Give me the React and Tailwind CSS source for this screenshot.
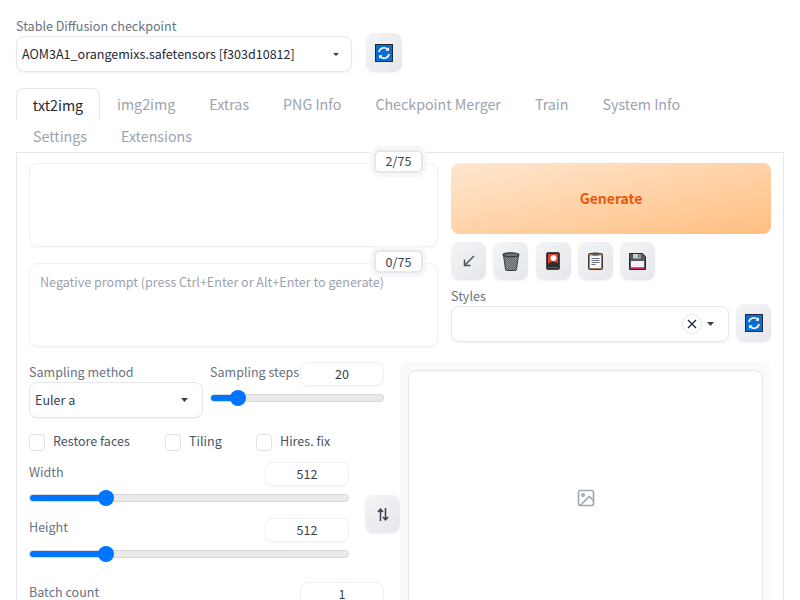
import React from 'react';

const inputBox = 'h-6 w-[84px] rounded-lg border border-[#eef0f2] bg-white text-center text-[12.55px] leading-[21px] text-[#374151] shadow-[0_1px_2px_rgba(0,0,0,0.04)]';
const btnBase = 'flex items-center justify-center rounded-lg bg-gradient-to-br from-[#f3f4f6] to-[#e5e7eb] shadow-[0_1px_2px_rgba(0,0,0,0.05)]';
const toolBtn = `${btnBase} h-[38px] w-[35px]`;
const label = 'text-[12.55px] leading-5 text-[#6b7280]';

const RefreshIcon = () => (
  <svg width="18" height="18" viewBox="0 0 18 18">
    <rect x="0.5" y="0.5" width="17" height="17" fill="#0a6ed1" stroke="#1f2937" />
    <path d="M4 8a5 5 0 0 1 8.6-2.6M14 10a5 5 0 0 1-8.6 2.6" fill="none" stroke="#fff" strokeWidth="1.6" />
    <path d="M14 3.2v3.6h-3.6zM4 14.8v-3.6h3.6z" fill="#fff" />
  </svg>
);

const Slider = ({ width, thumb }) => (
  <div className="relative h-2 rounded-full border border-[#d9d9d9] bg-[#e9e9e9]" style={{ width }}>
    <div className="h-full rounded-full bg-[#0075ff]" style={{ width: thumb }} />
    <div className="absolute top-1/2 h-4 w-4 -translate-x-1/2 -translate-y-1/2 rounded-full bg-[#0075ff]" style={{ left: thumb }} />
  </div>
);

const Check = ({ text, className }) => (
  <div className={`flex items-center gap-2 ${className}`}>
    <div className="h-[17px] w-[16px] rounded border border-[#e0e2e6] bg-white" />
    <span className="pb-[2px] text-[12.55px] leading-5 text-[#4b5563]">{text}</span>
  </div>
);

const Caret = () => (
  <svg width="7" height="4" viewBox="0 0 7 4"><path d="M0 0h7L3.5 4z" fill="#374151" /></svg>
);

const Counter = ({ text }) => (
  <div className="absolute right-[14px] top-[-14px] flex h-[23px] w-[49px] items-center justify-center rounded-md border-2 border-[#e5e7eb] bg-white text-[12.55px] text-[#374151] shadow-[0_0_0_4px_#f6f7f8]">
    {text}
  </div>
);

const App = () => {
  return (
    <div className="h-[600px] w-[800px] overflow-hidden bg-white px-4 pt-[16px] font-['Noto_Sans_CJK_JP','Liberation_Sans',sans-serif]">
      {/* checkpoint row */}
      <div className="flex items-end gap-[14px]">
        <div className="w-[336px]">
          <div className={label}>Stable Diffusion checkpoint</div>
          <div className="flex h-9 items-center justify-between rounded-lg border border-[#e5e7eb] bg-white pl-[5px] pr-[12px] shadow-[0_1px_2px_rgba(0,0,0,0.05)]">
            <span className="text-[12.55px] text-[#1f2937]">AOM3A1_orangemixs.safetensors [f303d10812]</span>
            <svg width="6" height="3" viewBox="0 0 6 3"><path d="M0 0h6L3 3z" fill="#374151" /></svg>
          </div>
        </div>
        <div className={`${btnBase} h-[39px] w-9`}><RefreshIcon /></div>
      </div>

      {/* tabs */}
      <div className="mt-4 flex h-8 items-stretch text-[14.25px] text-[#9ca3af]">
        <div className="flex w-[84px] items-center justify-center rounded-t-lg border border-b-0 border-[#e5e7eb] bg-white text-[#1f2937]">txt2img</div>
        <div className="ml-[17px] flex items-center gap-[34px]">
          <span>img2img</span>
          <span>Extras</span>
          <span>PNG Info</span>
          <span>Checkpoint Merger</span>
          <span>Train</span>
          <span>System Info</span>
        </div>
      </div>
      <div className="flex h-8 items-center gap-[34px] pl-[17px] text-[14.25px] text-[#9ca3af]">
        <span>Settings</span>
        <span>Extensions</span>
      </div>

      {/* main panel */}
      <div className="h-[500px] border border-[#e5e7eb] px-3 pt-[10px]">
        <div className="flex gap-[13px]">
          <div className="w-[409px]">
            <div className="relative h-[84px] rounded-lg border border-[#eef0f2] bg-white shadow-[0_1px_2px_rgba(0,0,0,0.03)]">
              <Counter text="2/75" />
            </div>
            <div className="relative mt-4 h-[84px] rounded-lg border border-[#eef0f2] bg-white px-[10px] py-[8px] text-[12.55px] leading-5 text-[#9ca3af] shadow-[0_1px_2px_rgba(0,0,0,0.03)]">
              <Counter text="0/75" />
              Negative prompt (press Ctrl+Enter or Alt+Enter to generate)
            </div>
          </div>

          <div className="w-[320px]">
            <div className="flex h-[71px] items-center justify-center rounded-lg bg-gradient-to-br from-[#ffe7cf] to-[#ffbe80] pb-[1px] text-[14px] font-semibold text-[#ea580c]">
              Generate
            </div>
            <div className="mt-[8px] flex gap-[7.25px]">
              <div className={toolBtn}>
                <svg width="14" height="14" viewBox="0 0 14 14" fill="none" stroke="#4b5563" strokeWidth="1.5">
                  <path d="M12 2L3 11M2.5 5.5V11.5H8.5" />
                </svg>
              </div>
              <div className={toolBtn}>
                <svg width="18" height="19" viewBox="0 0 18 19">
                  <defs>
                    <pattern id="mesh" width="2" height="2" patternUnits="userSpaceOnUse">
                      <rect width="2" height="2" fill="#5b6268" />
                      <rect width="1" height="1" fill="#8e969c" />
                      <rect x="1" y="1" width="1" height="1" fill="#8e969c" />
                    </pattern>
                  </defs>
                  <path d="M1.5 3h15l-2 14.5a1 1 0 0 1-1 1h-9a1 1 0 0 1-1-1z" fill="url(#mesh)" stroke="#3a4046" />
                  <ellipse cx="9" cy="2.8" rx="8" ry="2" fill="#6b7278" stroke="#30353a" strokeWidth="1.2" />
                </svg>
              </div>
              <div className={toolBtn}>
                <svg width="14" height="18" viewBox="0 0 14 18">
                  <rect x="0.5" y="0.5" width="13" height="17" rx="1.5" fill="#2e2e2e" stroke="#3f4650" />
                  <rect x="2" y="2" width="10" height="9.5" fill="#ee3a22" />
                  <circle cx="7.5" cy="6" r="3" fill="#fff" />
                  <path d="M2 12l4-2.5 6 1.5v5H2z" fill="#2e2e2e" />
                  <rect x="2" y="15" width="10" height="1.2" fill="#555" />
                </svg>
              </div>
              <div className={toolBtn}>
                <svg width="15" height="18" viewBox="0 0 15 18">
                  <rect x="0.5" y="1.5" width="14" height="16" rx="1" fill="#a47e5c" stroke="#3f3a36" />
                  <rect x="2" y="3.5" width="11" height="12.5" fill="#f7f7f7" />
                  <rect x="4.5" y="0.5" width="6" height="3" fill="#4b5563" />
                  <path d="M3.5 6.5h8M3.5 8.5h8M3.5 10.5h8M3.5 12.5h4" stroke="#6b7280" />
                </svg>
              </div>
              <div className={toolBtn}>
                <svg width="17" height="17" viewBox="0 0 17 17">
                  <path d="M0.5 0.5h13l3 3v13h-16z" fill="#55585c" stroke="#26282a" />
                  <rect x="4" y="1" width="7.5" height="4.5" fill="#c9cbce" />
                  <rect x="9" y="1.5" width="1.5" height="3" fill="#55585c" />
                  <rect x="2" y="8" width="13" height="6.5" fill="#f6f2f3" />
                  <rect x="2" y="14.5" width="13" height="1.5" fill="#dc1a60" />
                </svg>
              </div>
            </div>
            <div className={`${label} mt-[6px]`}>Styles</div>
            <div className="-mt-[2px] flex items-end gap-[7px]">
              <div className="flex h-9 w-[278px] items-center justify-end gap-[5px] rounded-lg border border-[#e5e7eb] bg-white pr-[14px] shadow-[0_1px_2px_rgba(0,0,0,0.05)]">
                <div className="flex h-5 w-5 items-center justify-center rounded-full border border-[#e5e7eb]">
                  <svg width="10" height="10" viewBox="0 0 10 10" stroke="#1f2937" strokeWidth="1.3"><path d="M1 1l8 8M9 1l-8 8" /></svg>
                </div>
                <Caret />
              </div>
              <div className={toolBtn}><RefreshIcon /></div>
            </div>
          </div>
        </div>

        {/* settings and gallery */}
        <div className="mt-[15px] flex">
          <div className="w-[371px]">
            <div className="flex gap-[7px]">
              <div className="w-[174px]">
                <div className={label}>Sampling method</div>
                <div className="flex h-[36px] items-center justify-between rounded-lg border border-[#e5e7eb] bg-white pl-[5px] pr-[14px] shadow-[0_1px_2px_rgba(0,0,0,0.05)]">
                  <span className="text-[12.55px] text-[#374151]">Euler a</span>
                  <Caret />
                </div>
              </div>
              <div className="w-[174px]">
                <div className="flex items-start justify-between">
                  <span className={label}>Sampling steps</span>
                  <div className={inputBox}>20</div>
                </div>
                <div className="mt-[8px]">
                  <Slider width={174} thumb={27} />
                </div>
              </div>
            </div>

            <div className="mt-[15px] flex h-[18px] items-center">
              <Check text="Restore faces" className="w-[136px]" />
              <Check text="Tiling" className="w-[91px]" />
              <Check text="Hires. fix" />
            </div>

            <div className="mt-[11px] flex items-start gap-4">
              <div className="w-[320px]">
                <div className="flex items-start justify-between">
                  <span className={label}>Width</span>
                  <div className={inputBox}>512</div>
                </div>
                <div className="mt-[8px]"><Slider width={320} thumb={76} /></div>
                <div className="mt-[16px] flex items-start justify-between">
                  <span className={`${label} -mt-px`}>Height</span>
                  <div className={inputBox}>512</div>
                </div>
                <div className="mt-[8px]"><Slider width={320} thumb={76} /></div>
              </div>
              <div className={`${toolBtn} mt-[33px]`}>
                <svg width="12" height="13" viewBox="0 0 12 13" fill="none" stroke="#374151" strokeWidth="1.5">
                  <path d="M3.5 13V1.5M1 4L3.5 1.2 6 4M8.5 0v11.5M6 9l2.5 2.8L11 9" />
                </svg>
              </div>
            </div>

            <div className="mt-[24px] flex items-start justify-between pr-[16px]">
              <span className={label}>Batch count</span>
              <div className={inputBox}>1</div>
            </div>
          </div>

          <div className="h-[300px] w-[371px] rounded-t-lg bg-[#f9fafb] p-2">
            <div className="flex h-[256px] items-center justify-center rounded-lg border border-[#e5e7eb] bg-white">
              <svg width="20" height="20" viewBox="0 0 24 24" fill="none" stroke="#a3a9b3" strokeWidth="2" strokeLinecap="round" strokeLinejoin="round">
                <rect x="3" y="3" width="18" height="18" rx="2" />
                <circle cx="8.5" cy="8.5" r="1.5" />
                <path d="M21 15l-5-5L5 21" />
              </svg>
            </div>
          </div>
        </div>
      </div>
    </div>
  );
};

export default App;
